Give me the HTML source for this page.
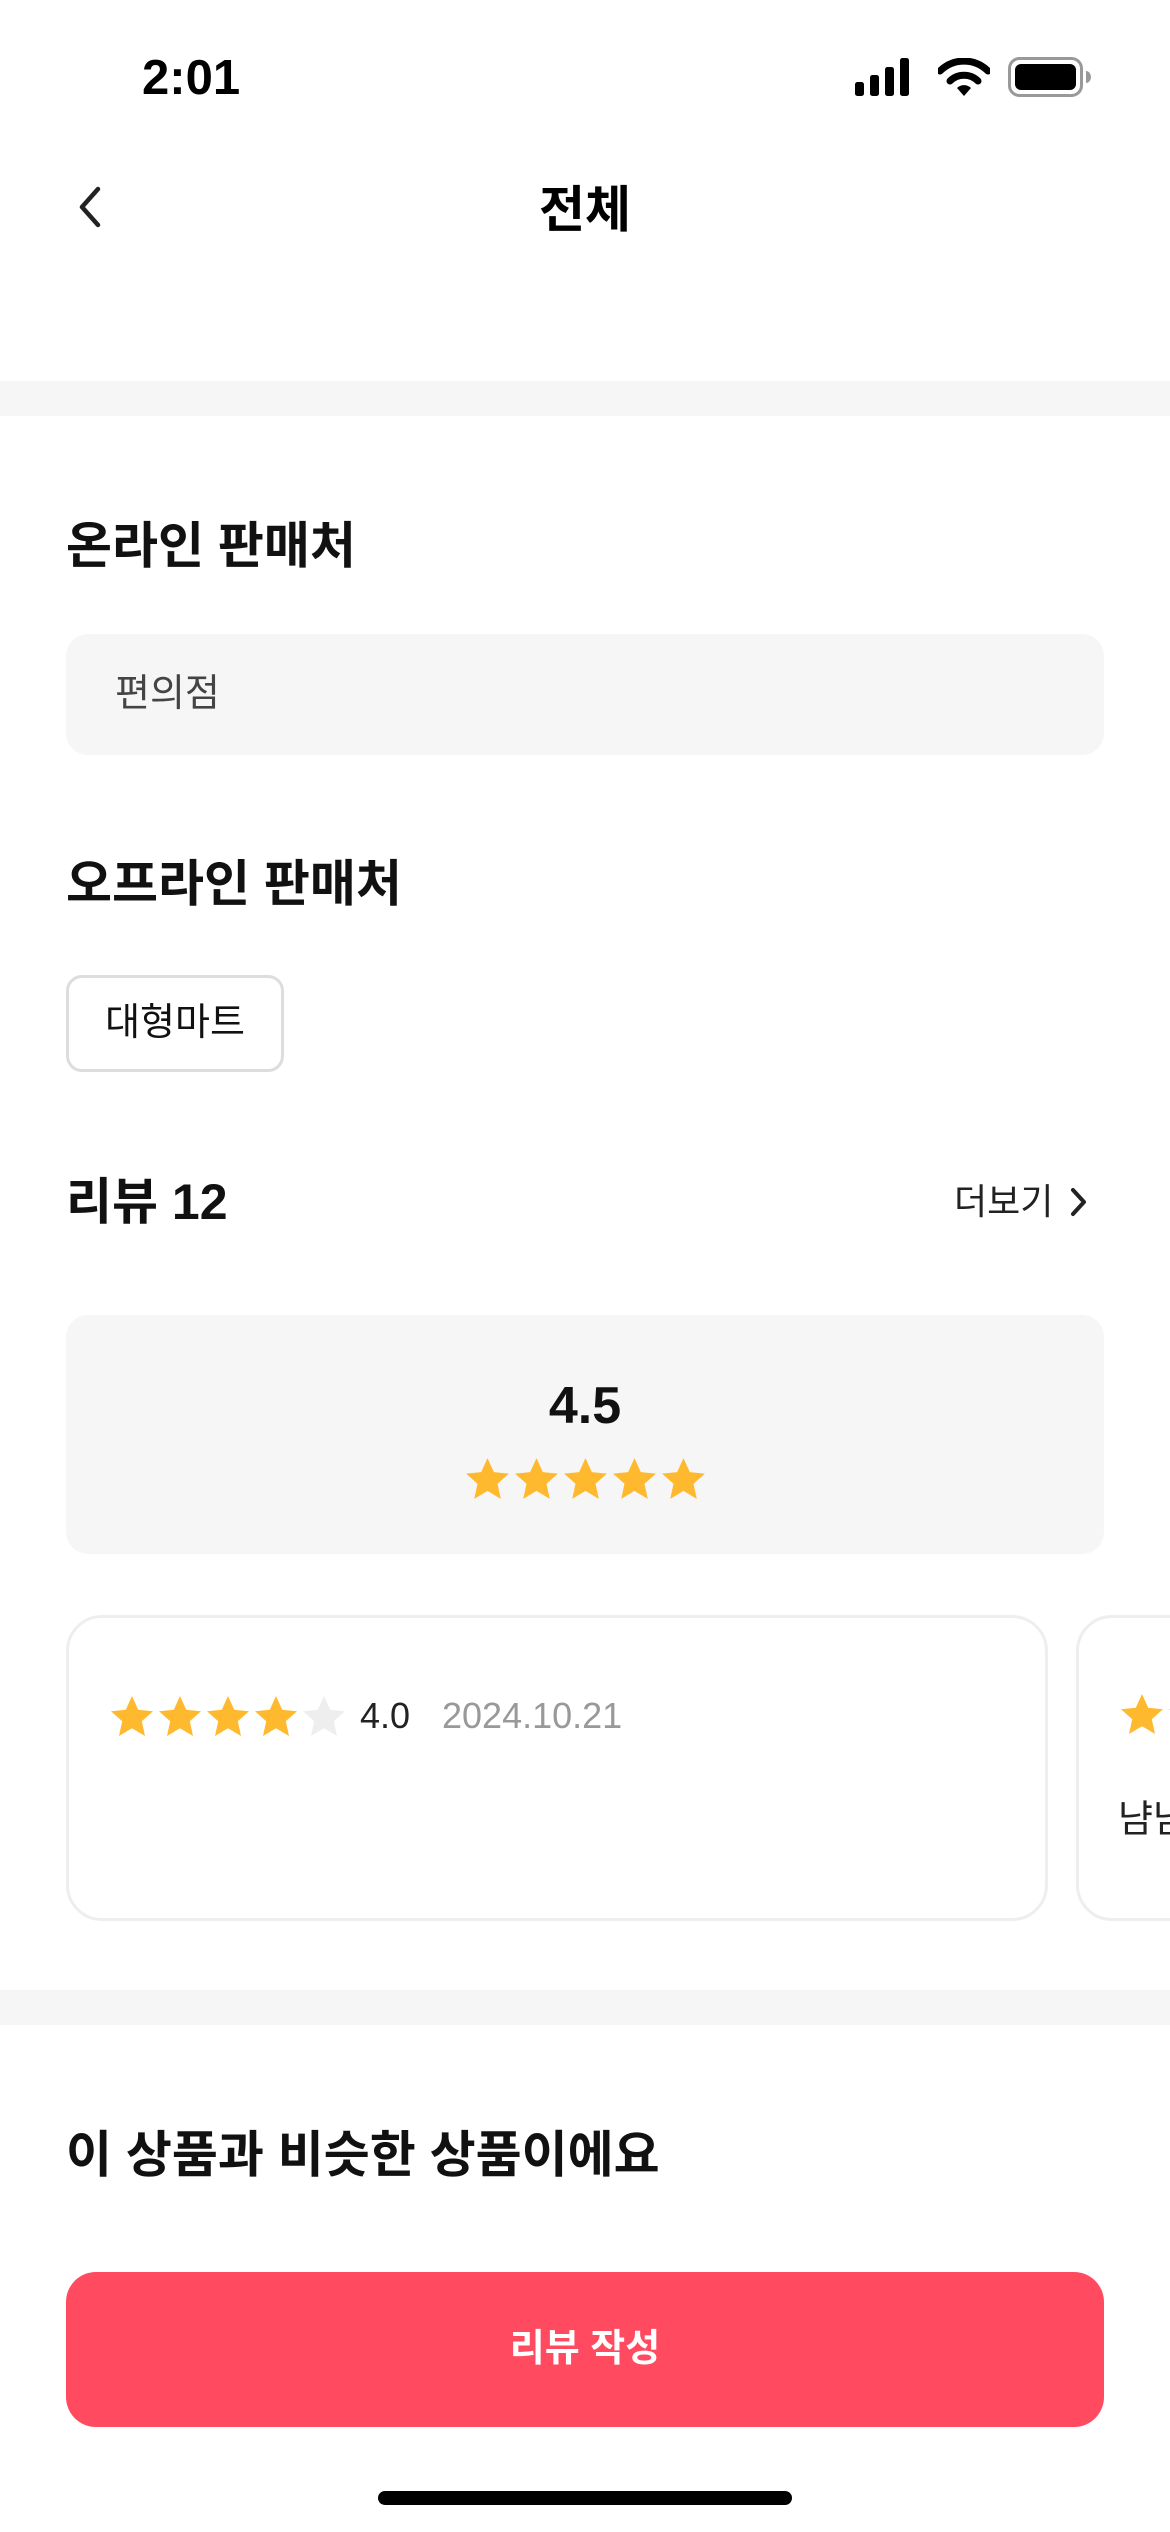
<!DOCTYPE html>
<html><head><meta charset="utf-8">
<style>
*{margin:0;padding:0;box-sizing:border-box}
body{width:1170px;height:2532px;background:#fff;position:relative;overflow:hidden;font-family:"Liberation Sans","Noto Sans CJK KR",sans-serif;color:#111}
.a{position:absolute}
.h{font-size:50px;font-weight:700;color:#111;line-height:62px;white-space:nowrap}
.star{display:inline-block;width:48px;height:48px;vertical-align:top}
</style></head><body>
<div class="a" style="left:142px;top:50px;font-size:49px;font-weight:700;line-height:56px;color:#000">2:01</div>
<svg class="a" style="left:855px;top:58px" width="60" height="38" viewBox="0 0 60 38"><rect x="0" y="24" width="9" height="14" rx="2.5"/><rect x="15" y="17" width="9" height="21" rx="2.5"/><rect x="30" y="9" width="9" height="29" rx="2.5"/><rect x="45" y="0" width="9" height="38" rx="2.5"/></svg>
<svg class="a" style="left:938px;top:58px" width="52" height="38" viewBox="0 0 52 38"><path d="M2 13 A34 34 0 0 1 50 13" stroke="#000" stroke-width="7" fill="none" stroke-linecap="round"/><path d="M12 23 A20 20 0 0 1 40 23" stroke="#000" stroke-width="7" fill="none" stroke-linecap="round"/><path d="M19 30 L26 38 L33 30 A10 10 0 0 0 19 30Z"/></svg>
<svg class="a" style="left:1008px;top:57px" width="84" height="40" viewBox="0 0 84 40"><rect x="1.5" y="1.5" width="72" height="37" rx="10" fill="none" stroke="#999" stroke-width="3"/><rect x="7" y="7" width="61" height="26" rx="6"/><path d="M78 14 a5 6 0 0 1 0 12z" fill="#999"/></svg>
<svg class="a" style="left:74px;top:185px" width="30" height="44" viewBox="0 0 30 44"><path d="M24 4 L8 22 L24 40" stroke="#222" stroke-width="4.5" fill="none" stroke-linecap="round" stroke-linejoin="round"/></svg>
<div class="a" style="left:0;width:1170px;top:180px;text-align:center;font-size:50px;font-weight:700;line-height:60px;color:#000">전체</div>
<div class="a" style="left:0;top:381px;width:1170px;height:35px;background:#f6f6f6"></div>
<div class="a h" style="left:66px;top:515px">온라인 판매처</div>
<div class="a" style="left:66px;top:634px;width:1038px;height:121px;background:#f6f6f6;border-radius:22px;font-size:38px;color:#444;line-height:121px;padding-left:49px">편의점</div>
<div class="a h" style="left:66px;top:853px">오프라인 판매처</div>
<div class="a" style="left:66px;top:975px;width:218px;height:97px;border:3px solid #ddd;border-radius:16px;font-size:38px;color:#111;line-height:91px;text-align:center">대형마트</div>
<div class="a h" style="left:66px;top:1171px">리뷰 12</div>
<div class="a" style="left:954px;top:1180px;font-size:36px;color:#222;line-height:44px">더보기</div>
<svg class="a" style="left:1068px;top:1186px" width="22" height="32" viewBox="0 0 22 32"><path d="M5 4 L16 16 L5 28" stroke="#222" stroke-width="4" fill="none" stroke-linecap="round" stroke-linejoin="round"/></svg>
<div class="a" style="left:66px;top:1315px;width:1038px;height:239px;background:#f6f6f6;border-radius:22px"></div>
<div class="a" style="left:0;width:1170px;top:1376px;text-align:center;font-size:52px;font-weight:700;line-height:60px;color:#111">4.5</div>
<svg width="0" height="0" style="position:absolute"><defs><symbol id="s" viewBox="0 0 24 24"><path d="M12 1.5l3.1 6.9 7.4.7-5.6 5 1.6 7.4L12 17.6 5.5 21.5l1.6-7.4-5.6-5 7.4-.7z"/></symbol></defs></svg>
<div class="a" style="left:463px;top:1455px;white-space:nowrap;font-size:0">
<svg class="star" style="width:49px;height:49px" fill="#ffb92e"><use href="#s"/></svg><svg class="star" style="width:49px;height:49px" fill="#ffb92e"><use href="#s"/></svg><svg class="star" style="width:49px;height:49px" fill="#ffb92e"><use href="#s"/></svg><svg class="star" style="width:49px;height:49px" fill="#ffb92e"><use href="#s"/></svg><svg class="star" style="width:49px;height:49px" fill="#ffb92e"><use href="#s"/></svg></div>
<div class="a" style="left:66px;top:1615px;width:982px;height:306px;border:3px solid #eee;border-radius:36px"></div>
<div class="a" style="left:1076px;top:1615px;width:400px;height:306px;border:3px solid #eee;border-radius:36px"></div>
<div class="a" style="left:108px;top:1693px;white-space:nowrap;font-size:0">
<svg class="star" fill="#ffb92e"><use href="#s"/></svg><svg class="star" fill="#ffb92e"><use href="#s"/></svg><svg class="star" fill="#ffb92e"><use href="#s"/></svg><svg class="star" fill="#ffb92e"><use href="#s"/></svg><svg class="star" fill="#eeeeee"><use href="#s"/></svg></div>
<div class="a" style="left:360px;top:1694px;font-size:36px;color:#222;line-height:44px">4.0</div>
<div class="a" style="left:442px;top:1694px;font-size:36px;color:#999;line-height:44px;white-space:nowrap">2024.10.21</div>
<div class="a" style="left:1118px;top:1691px;font-size:0;white-space:nowrap"><svg class="star" fill="#ffb92e"><use href="#s"/></svg><svg class="star" fill="#ffb92e"><use href="#s"/></svg></div>
<div class="a" style="left:1118px;top:1796px;font-size:38px;color:#222;line-height:48px;white-space:nowrap">냠냠</div>
<div class="a" style="left:0;top:1990px;width:1170px;height:35px;background:#f6f6f6"></div>
<div class="a h" style="left:66px;top:2124px">이 상품과 비슷한 상품이에요</div>
<div class="a" style="left:66px;top:2272px;width:1038px;height:155px;background:#ff4a60;border-radius:30px;color:#fff;font-size:38px;font-weight:700;line-height:155px;text-align:center">리뷰 작성</div>
<div class="a" style="left:378px;top:2491px;width:414px;height:14px;background:#000;border-radius:7px"></div>
</body></html>
